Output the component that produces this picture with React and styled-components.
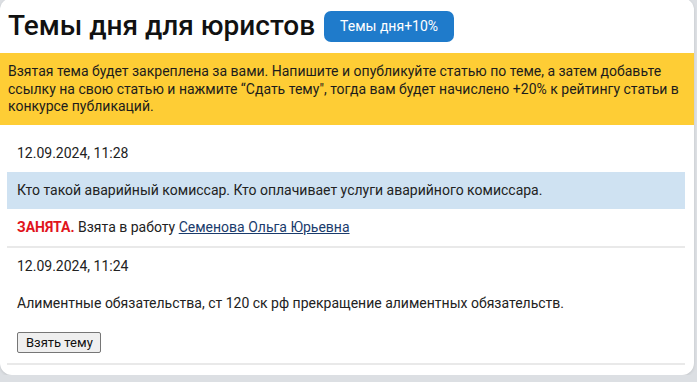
import React from "react";
import styled, { createGlobalStyle } from "styled-components";

const Global = createGlobalStyle`
  html, body { margin: 0; padding: 0; background: #dcdfe3; }
  body { font-family: Roboto, "Noto Sans", Arial, sans-serif; color: #222; }
`;

const Card = styled.div`
  width: 694px;
  margin-top: -2px;
  background: #fff;
  border-radius: 12px;
  box-shadow: 0 1px 3px rgba(0, 0, 0, 0.12);
  padding-bottom: 10px;
  overflow: hidden;
`;

const Header = styled.div`
  display: flex;
  align-items: center;
  gap: 9px;
  height: 55px;
  padding: 0 8px;
`;

const Title = styled.h1`
  margin: 0;
  font-size: 28px;
  font-weight: 500;
  color: #111;
`;

const Badge = styled.span`
  display: inline-flex;
  align-items: center;
  height: 31px;
  padding: 0 16px;
  border-radius: 7px;
  background: #1f7bcb;
  color: #fff;
  font-size: 14px;
  margin-top: 1px;
`;

const Notice = styled.div`
  background: #fecd35;
  padding: 10px 8px 9px;
  font-size: 14px;
  line-height: 17.5px;
  color: #1c1c1c;
`;

const List = styled.div`
  padding: 10px 9px 0 7px;
`;

const Item = styled.div`
  border-bottom: 2px solid #e9e9e9;
`;

const Line = styled.div`
  padding: 10px 10px;
  font-size: 14px;
  line-height: 17px;
  color: #222;
  background: ${(p) => (p.$taken ? "#cfe2f2" : "transparent")};
`;

const Busy = styled.b`
  color: #e1141c;
  font-weight: 700;
`;

const Person = styled.a`
  color: #1a3b6c;
  text-decoration: underline;
`;

const Actions = styled.div`
  padding: 10px 10px;
  display: flex;
`;

const TakeButton = styled.button`
  font-family: Roboto, Arial, sans-serif;
  font-size: 13px;
  height: 21px;
  padding: 0 7px 0 8px;
  background: #efefef;
  border: 1px solid #767676;
  border-radius: 2px;
  color: #111;
`;

const topics = [
  {
    date: "12.09.2024, 11:28",
    title:
      "Кто такой аварийный комиссар. Кто оплачивает услуги аварийного комиссара.",
    takenBy: "Семенова Ольга Юрьевна",
  },
  {
    date: "12.09.2024, 11:24",
    title:
      "Алиментные обязательства, ст 120 ск рф прекращение алиментных обязательств.",
  },
];

export default function App() {
  return (
    <>
      <Global />
      <Card>
        <Header>
          <Title>Темы дня для юристов</Title>
          <Badge>Темы дня+10%</Badge>
        </Header>
        <Notice>
          Взятая тема будет закреплена за вами. Напишите и опубликуйте статью по
          теме, а затем добавьте ссылку на свою статью и нажмите “Сдать тему",
          тогда вам будет начислено +20% к рейтингу статьи в конкурсе публикаций.
        </Notice>
        <List>
          {topics.map((t) => (
            <Item key={t.date}>
              <Line>{t.date}</Line>
              <Line $taken={!!t.takenBy}>{t.title}</Line>
              {t.takenBy ? (
                <Line>
                  <Busy>ЗАНЯТА.</Busy> Взята в работу{" "}
                  <Person href="#">{t.takenBy}</Person>
                </Line>
              ) : (
                <Actions>
                  <TakeButton>Взять тему</TakeButton>
                </Actions>
              )}
            </Item>
          ))}
        </List>
      </Card>
    </>
  );
}
